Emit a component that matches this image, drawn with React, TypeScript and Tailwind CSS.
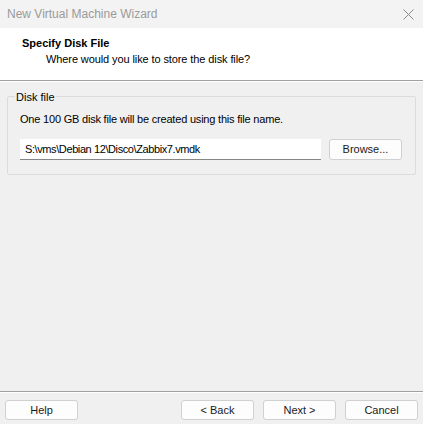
import React from "react";

const btn =
  "h-[20px] w-[73px] rounded-[3px] border border-[#d0d0d0] bg-[#fdfdfd] text-[11px] leading-none text-[#1a1a1a] flex items-center justify-center";

export default function App() {
  return (
    <div
      className="flex h-[424px] w-[423px] flex-col bg-[#f0f0f0] text-[11px] text-[#000]"
      style={{ fontFamily: '"Liberation Sans", Arial, sans-serif' }}
    >
      {/* Title bar */}
      <div className="flex h-[28px] items-center justify-between bg-[#f3f3f3] pl-[7px] pr-[9px]">
        <span className="text-[12px] text-[#9a9a9a]">New Virtual Machine Wizard</span>
        <svg width="11" height="11" viewBox="0 0 11 11" className="text-[#8a8a8a]">
          <path d="M0.5 0.5 L10.5 10.5 M10.5 0.5 L0.5 10.5" stroke="currentColor" strokeWidth="1" />
        </svg>
      </div>

      {/* Header */}
      <div className="flex h-[52px] flex-col bg-white pl-[22px] pt-[7px]">
        <div className="font-bold leading-[16px]">Specify Disk File</div>
        <div className="pl-[24px] leading-[16px] tracking-[-0.1px]">Where would you like to store the disk file?</div>
      </div>
      <div className="h-px bg-[#a0a0a0]" />
      <div className="h-px bg-white" />

      {/* Body */}
      <div className="flex flex-1 flex-col px-[7px] pt-[14px]">
        <div className="relative h-[79px] rounded-[2px] border border-[#dcdcdc] px-[12px] pt-[14px]">
          <span className="absolute left-[7px] top-[-8px] bg-[#f0f0f0] px-[1px] leading-[16px]">Disk file</span>
          <div className="leading-[16px] tracking-[-0.2px]">One 100 GB disk file will be created using this file name.</div>
          <div className="mt-[12px] flex items-center">
            <div className="flex h-[21px] w-[301px] items-center border-b border-[#868686] bg-white pl-[5px] tracking-[-0.4px]">
              S:\vms\Debian 12\Disco\Zabbix7.vmdk
            </div>
            <div className={btn + " ml-[8px] h-[21px]"}>Browse...</div>
          </div>
        </div>
      </div>

      {/* Footer */}
      <div className="h-px bg-[#a0a0a0]" />
      <div className="h-px bg-white" />
      <div className="flex h-[31px] items-start justify-between px-[5px] pt-[7px]">
        <div className={btn}>Help</div>
        <div className="flex gap-[9px]">
          <div className={btn}>&lt; Back</div>
          <div className={btn}>Next &gt;</div>
          <div className={btn}>Cancel</div>
        </div>
      </div>
    </div>
  );
}
